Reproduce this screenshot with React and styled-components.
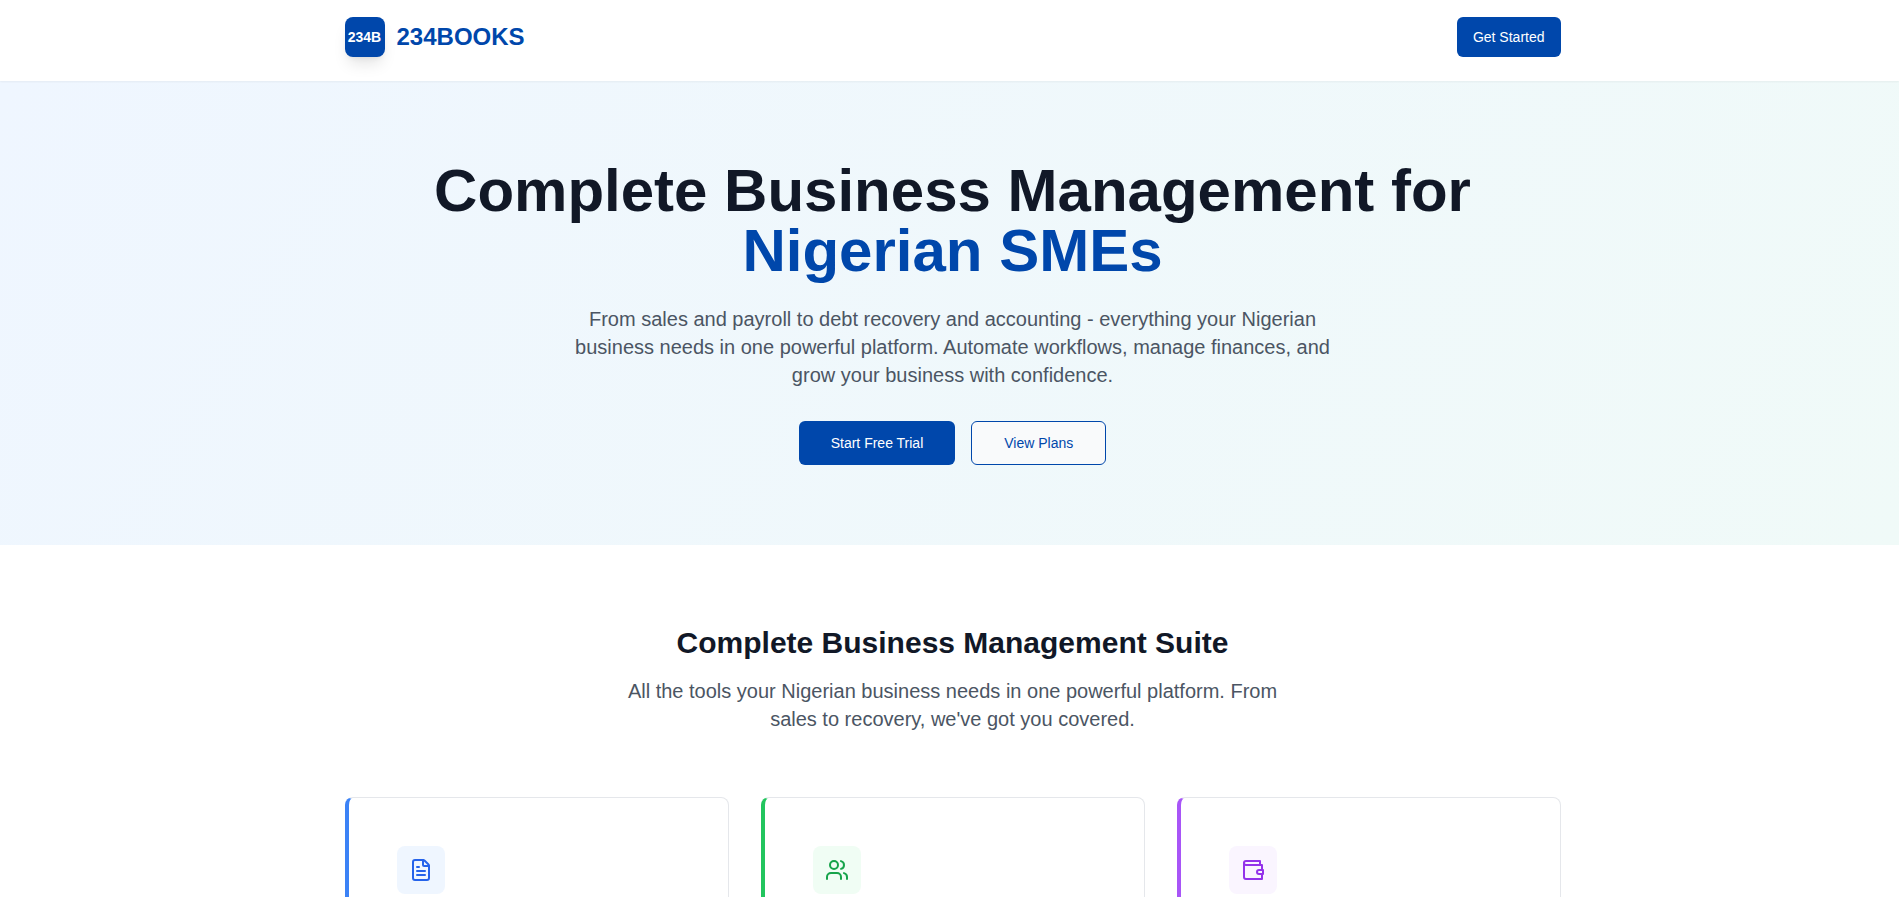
import { FileText, Users } from "lucide-react"
import styled, { createGlobalStyle } from "styled-components"

const GlobalStyle = createGlobalStyle`
*, *::before, *::after {
  box-sizing: border-box;
}
body {
  margin: 0;
  background-color: #fff;
  color: #0f172a;
  font-family: "Liberation Sans", Arial, sans-serif;
  line-height: 24px;
}
html {
  scrollbar-width: none;
}
h1, h2, p {
  margin: 0;
}
`
const Header = styled.header`
position: relative;
background-color: #fff;
box-shadow: 0 1px 2px rgba(0, 0, 0, 0.05);
`
const Wrapper = styled.div`
max-width: 1286px;
margin: 0 auto;
padding: 0 32px 0 38px;
`
const Nav = styled.div`
display: flex;
align-items: flex-start;
justify-content: space-between;
padding: 17px 0 24px;
`
const Brand = styled.a`
display: flex;
align-items: center;
gap: 12px;
color: #0047ab;
font-size: 24px;
font-weight: 700;
text-decoration: none;
`
const Logo = styled.span`
width: 40px;
height: 40px;
border-radius: 8px;
display: flex;
align-items: center;
justify-content: center;
background-color: #0047ab;
color: #fff;
font-size: 14px;
box-shadow: 0 10px 15px -3px rgba(0, 0, 0, 0.1), 0 4px 6px -4px rgba(0, 0, 0, 0.1);
`
const Button = styled.button`
height: ${props=>props.$large ? "44px" : "40px"};
padding: 0 ${props=>props.$large ? "32px" : "16px"};
border: ${props=>props.$outline ? "1px solid #0047ab" : "none"};
border-radius: 6px;
background-color: ${props=>props.$outline ? "#f9fafb" : "#0047ab"};
color: ${props=>props.$outline ? "#0047ab" : "#fff"};
font-family: inherit;
font-size: 14px;
cursor: pointer;
`
const Hero = styled.section`
padding: 80px 0;
background: linear-gradient(120deg, #eff6ff, #f0faf8);
text-align: center;
`
const Title = styled.h1`
color: #111827;
font-size: 60px;
font-weight: 700;
line-height: 60px;
`
const Highlight = styled.span`
display: block;
color: #0047ab;
`
const Desc = styled.p`
max-width: ${props=>props.$narrow ? "672px" : "768px"};
margin: 0 auto;
color: #4b5563;
font-size: 20px;
line-height: 28px;
`
const HeroBody = styled.div`
display: flex;
flex-direction: column;
gap: 24px;
`
const Actions = styled.div`
display: flex;
justify-content: center;
gap: 16px;
padding-top: 8px;
`
const Features = styled.section`
padding: 80px 0;
`
const SectionHead = styled.div`
margin-bottom: 64px;
text-align: center;
`
const SectionTitle = styled.h2`
margin-bottom: 16px;
color: #111827;
font-size: 30px;
font-weight: 700;
line-height: 36px;
`
const Grid = styled.div`
display: grid;
grid-template-columns: repeat(3, 1fr);
gap: 32px;
`
const Card = styled.article`
padding: 48px;
border: 1px solid #e5e7eb;
border-left: 4px solid ${props=>props.color};
border-radius: 8px;
background-color: #fff;
`
const IconBox = styled.div`
width: 48px;
height: 48px;
border-radius: 8px;
display: flex;
align-items: center;
justify-content: center;
background-color: ${props=>props.$bg};
color: ${props=>props.color};
`

const WalletIcon = () => (
  <svg width="24" height="24" viewBox="0 0 24 24" fill="none" stroke="currentColor" strokeWidth="2" strokeLinecap="round" strokeLinejoin="round">
    <path d="M21 12V7H5a2 2 0 0 1 0-4h14v4" />
    <path d="M3 5v14a2 2 0 0 0 2 2h16v-5" />
    <path d="M18 12a2 2 0 0 0 0 4h4v-4Z" />
  </svg>
)

const features = [
  { id: 1, icon: FileText, border: "#3b82f6", bg: "#eff6ff", color: "#2563eb" },
  { id: 2, icon: Users, border: "#22c55e", bg: "#f0fdf4", color: "#16a34a" },
  { id: 3, icon: WalletIcon, border: "#a855f7", bg: "#faf5ff", color: "#9333ea" },
]

const App = () => {
  return (
    <>
      <GlobalStyle />
      <Header>
        <Wrapper>
          <Nav>
            <Brand href="#">
              <Logo>234B</Logo>
              234BOOKS
            </Brand>
            <Button>Get Started</Button>
          </Nav>
        </Wrapper>
      </Header>
      <main>
        <Hero>
          <Wrapper>
            <HeroBody>
              <Title>
                Complete Business Management for
                <Highlight>Nigerian SMEs</Highlight>
              </Title>
              <Desc>
                From sales and payroll to debt recovery and accounting - everything your Nigerian business needs in one powerful platform. Automate workflows, manage finances, and grow your business with confidence.
              </Desc>
              <Actions>
                <Button $large>Start Free Trial</Button>
                <Button $large $outline>View Plans</Button>
              </Actions>
            </HeroBody>
          </Wrapper>
        </Hero>
        <Features>
          <Wrapper>
            <SectionHead>
              <SectionTitle>Complete Business Management Suite</SectionTitle>
              <Desc $narrow>
                All the tools your Nigerian business needs in one powerful platform. From sales to recovery, we've got you covered.
              </Desc>
            </SectionHead>
            <Grid>
              {features.map((item) => (
                <Card key={item.id} color={item.border}>
                  <IconBox $bg={item.bg} color={item.color}>
                    <item.icon />
                  </IconBox>
                </Card>
              ))}
            </Grid>
          </Wrapper>
        </Features>
      </main>
    </>
  )
}

export default App
